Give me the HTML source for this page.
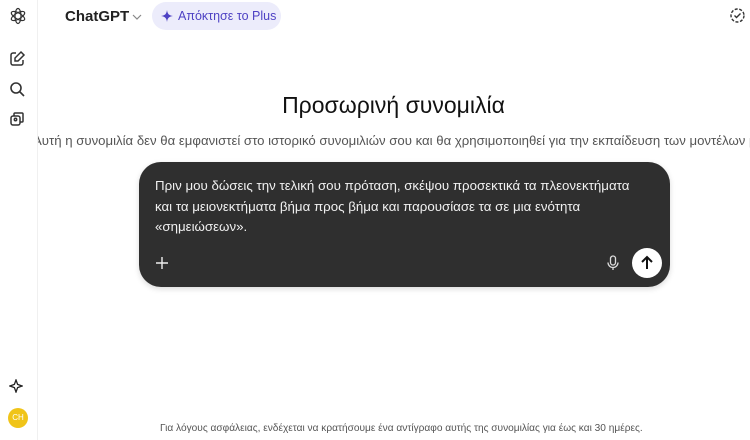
<!DOCTYPE html>
<html><head><meta charset="utf-8"><style>
body{margin:0;width:750px;height:440px;overflow:hidden;background:#fff;font-family:"Liberation Sans","DejaVu Sans",sans-serif;position:relative;color:#0d0d0d}
.side{position:absolute;left:0;top:0;width:37px;height:440px;border-right:1px solid #f0f0f0;background:#fff;z-index:2}
.ic{position:absolute;left:8px}
.title{position:absolute;left:65px;top:8px;font-size:15px;font-weight:bold;color:#222}
.chev{position:absolute;left:131px;top:11px}
.plus{position:absolute;left:152px;top:2px;width:129px;height:28px;border-radius:14px;background:#ececfb;color:#4e42c4;font-size:12.5px;line-height:28px;text-indent:26px}
h1{position:absolute;top:92px;left:0;right:0;margin:0 0 0 37px;text-align:center;font-weight:normal;font-size:23px;color:#111}
.sub{position:absolute;top:133px;left:33px;white-space:nowrap;font-size:13.2px;color:#555}
.box{position:absolute;left:139px;top:162px;width:531px;height:125px;border-radius:22px;background:#2f2f2f;color:#f0f0f0;box-shadow:0 2px 6px rgba(0,0,0,.15)}
.box p{margin:0;position:absolute;left:16px;top:14px;width:478px;font-size:13.3px;line-height:20.5px}
.send{position:absolute;left:493px;top:86px;width:30px;height:30px;border-radius:50%;background:#fff}
.foot{position:absolute;top:423px;left:160px;font-size:10.15px;color:#555;white-space:nowrap}
.av{position:absolute;left:8px;top:408px;width:20px;height:20px;border-radius:50%;background:#f0c419;color:#fff;font-size:8px;text-align:center;line-height:20px}
</style></head><body>
<div class="side">
<svg class="ic" style="top:6px" width="20" height="20" viewBox="0 0 20 20" fill="none" stroke="#333" stroke-width="1.2"><ellipse cx="10" cy="10" rx="3" ry="7.5"/><ellipse cx="10" cy="10" rx="3" ry="7.5" transform="rotate(60 10 10)"/><ellipse cx="10" cy="10" rx="3" ry="7.5" transform="rotate(-60 10 10)"/></svg>
<svg class="ic" style="top:50px" width="18" height="18" viewBox="0 0 18 18" fill="none" stroke="#333" stroke-width="1.5"><path d="M8 3H5a2 2 0 0 0-2 2v8a2 2 0 0 0 2 2h8a2 2 0 0 0 2-2v-3"/><path d="M13 2l3 3-6 6H7V8z"/></svg>
<svg class="ic" style="top:80px" width="18" height="18" viewBox="0 0 18 18" fill="none" stroke="#333" stroke-width="1.6"><circle cx="8" cy="8" r="5"/><path d="M12 12l4 4"/></svg>
<svg class="ic" style="top:110px" width="18" height="18" viewBox="0 0 18 18" fill="none" stroke="#333" stroke-width="1.5"><rect x="3" y="6" width="9" height="9" rx="2"/><path d="M6 6V4a1 1 0 0 1 1-1h7a1 1 0 0 1 1 1v7a1 1 0 0 1-1 1h-2"/><circle cx="7.5" cy="9.5" r="1.2"/></svg>
<svg class="ic" style="top:379px;left:9px" width="14" height="14" viewBox="0 0 14 14" fill="none" stroke="#222" stroke-width="1.3"><path d="M7 1L8.6 5.4 13 7 8.6 8.6 7 13 5.4 8.6 1 7 5.4 5.4z"/></svg>
<div class="av">CH</div>
</div>
<div class="title">ChatGPT</div>
<svg class="chev" width="12" height="12" viewBox="0 0 12 12" fill="none" stroke="#888" stroke-width="1.2"><path d="M2 4l4 4 4-4"/></svg>
<div class="plus"><svg style="position:absolute;left:9px;top:8px" width="12" height="12" viewBox="0 0 12 12"><path d="M6 0C6.5 4 8 5.5 12 6 8 6.5 6.5 8 6 12 5.5 8 4 6.5 0 6 4 5.5 5.5 4 6 0z" fill="#4e42c4"/></svg>Απόκτησε το Plus</div>
<svg style="position:absolute;left:729px;top:7px" width="17" height="17" viewBox="0 0 17 17" fill="none" stroke="#333" stroke-width="1.4" stroke-dasharray="3 1.6"><circle cx="8.5" cy="8.5" r="6.5"/><path d="M5.5 8.5l2 2 4-4" stroke-dasharray="none"/></svg>
<h1>Προσωρινή συνομιλία</h1>
<div class="sub">Αυτή η συνομιλία δεν θα εμφανιστεί στο ιστορικό συνομιλιών σου και θα χρησιμοποιηθεί για την εκπαίδευση των μοντέλων μας.</div>
<div class="box">
<p>Πριν μου δώσεις την τελική σου πρόταση, σκέψου προσεκτικά τα πλεονεκτήματα και τα μειονεκτήματα βήμα προς βήμα και παρουσίασε τα σε μια ενότητα «σημειώσεων».</p>
<svg style="position:absolute;left:16px;top:94px" width="14" height="14" viewBox="0 0 14 14" stroke="#eee" stroke-width="1.4"><path d="M7 1v12M1 7h12"/></svg>
<svg style="position:absolute;left:467px;top:93px" width="14" height="16" viewBox="0 0 14 16" fill="none" stroke="#ddd" stroke-width="1.3"><rect x="4.5" y="1" width="5" height="9" rx="2.5"/><path d="M2 7.5a5 5 0 0 0 10 0M7 12.5V15"/></svg>
<div class="send"><svg style="position:absolute;left:8px;top:7px" width="14" height="16" viewBox="0 0 14 16" fill="none" stroke="#111" stroke-width="2"><path d="M7 14V2M2 7l5-5 5 5"/></svg></div>
</div>
<div class="foot">Για λόγους ασφάλειας, ενδέχεται να κρατήσουμε ένα αντίγραφο αυτής της συνομιλίας για έως και 30 ημέρες.</div>
</body></html>
